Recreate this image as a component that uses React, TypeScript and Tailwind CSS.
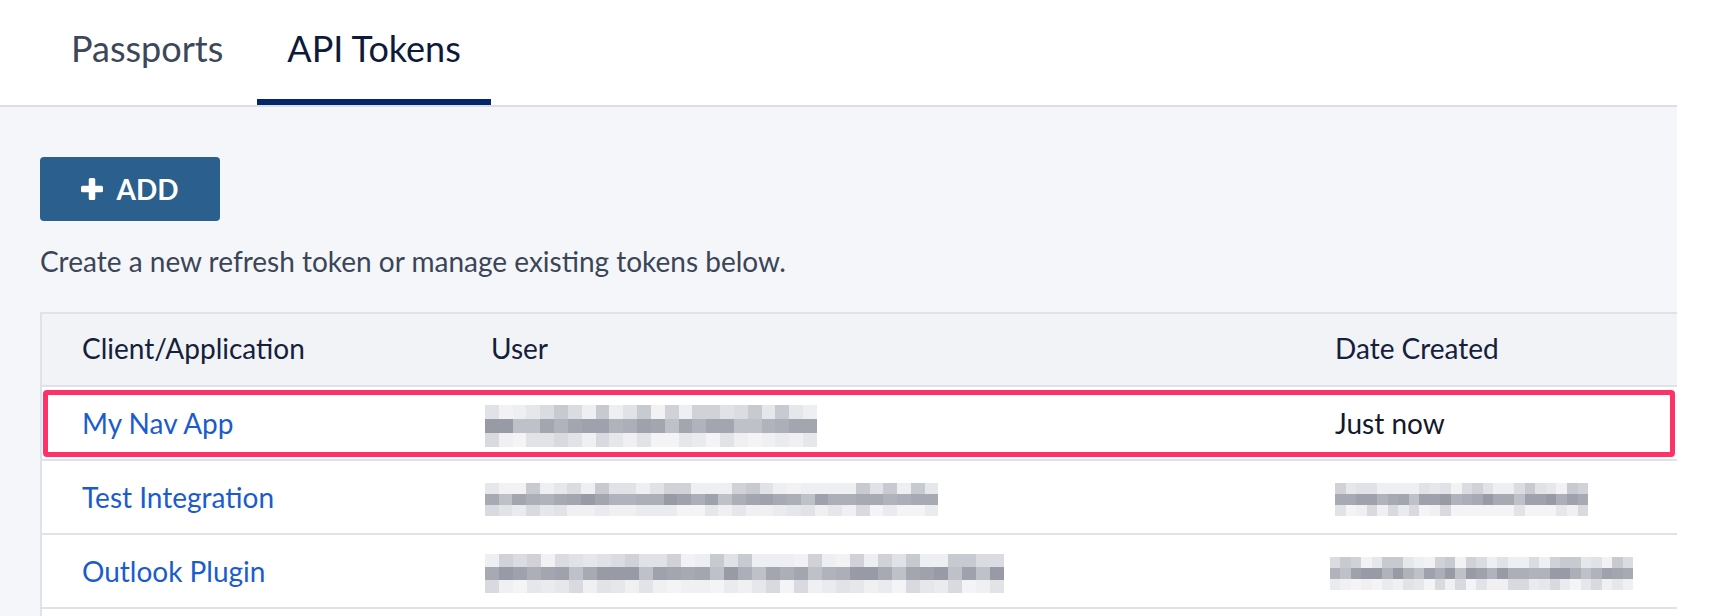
import React from "react";

// mosaic palettes (pixelated, blurred-out values)
const TOP = ["bg-[#e6e7eb]", "bg-[#dadce1]", "bg-[#eeeff2]", "bg-[#d0d2d8]", "bg-[#e1e2e7]", "bg-[#c8cad1]", "bg-[#f2f2f4]"];
const MID = ["bg-[#9fa2ac]", "bg-[#a7aab3]", "bg-[#b0b3bb]", "bg-[#989ba6]", "bg-[#bfc1c8]", "bg-[#a3a6af]", "bg-[#acafb8]"];
const BOT = ["bg-[#eaebee]", "bg-[#e2e3e7]", "bg-[#f0f0f3]", "bg-[#d8dadf]", "bg-[#f4f4f6]", "bg-[#e6e7ea]"];

function rng(seed: number) {
  let s = seed;
  return () => {
    s = (s * 9301 + 49297) % 233280;
    return s / 233280;
  };
}

type Blur = { cells: number; seed: number; w: string; h: string; ml: string };

function Mosaic({ cells, seed, h, w, ml }: Blur) {
  const rand = rng(seed);
  const rows = [TOP, MID, BOT].map((pal) => Array.from({ length: cells }, () => pal[Math.floor(rand() * pal.length)]));
  return (
    <div className={`flex flex-col ${w} ${ml}`}>
      {rows.map((row, i) => (
        <div key={i} className={`flex ${h}`}>
          {row.map((c, j) => (
            <div key={j} className={`flex-1 ${c}`} />
          ))}
        </div>
      ))}
    </div>
  );
}

type Row = { name: string; user: Blur; date: string | Blur; highlight?: boolean };

const ROWS: Row[] = [
  {
    name: "My Nav App",
    user: { cells: 24, seed: 11, w: "w-[332px]", h: "h-[14px]", ml: "-ml-[6px]" },
    date: "Just now",
    highlight: true,
  },
  {
    name: "Test Integration",
    user: { cells: 33, seed: 47, w: "w-[453px]", h: "h-[11px]", ml: "-ml-[6px]" },
    date: { cells: 24, seed: 83, w: "w-[253px]", h: "h-[11px]", ml: "ml-0" },
  },
  {
    name: "Outlook Plugin",
    user: { cells: 37, seed: 129, w: "w-[519px]", h: "h-[13px]", ml: "-ml-[6px]" },
    date: { cells: 29, seed: 201, w: "w-[303px]", h: "h-[11px]", ml: "-ml-[5px]" },
  },
];

function PlusIcon() {
  return (
    <svg width="22" height="22" viewBox="0 0 22 22" fill="currentColor">
      <rect x="7.75" y="0" width="6.5" height="22" rx="1.5" />
      <rect x="0" y="7.75" width="22" height="6.5" rx="1.5" />
    </svg>
  );
}

export default function App() {
  return (
    <div className="h-[616px] w-[1718px] overflow-hidden bg-white font-['Lato','Noto_Sans',sans-serif]">
      <div className="w-[1677px]">
        {/* Tabs */}
        <nav className="flex h-[107px] gap-[3px] border-b-2 border-[#dcdde5] bg-white pl-[40px]">
          <div className="flex cursor-pointer flex-col border-b-[6px] border-transparent px-[31px] pt-[27px] text-[36px] leading-[1.2] text-[#3c475b]">
            Passports
          </div>
          <div className="flex cursor-pointer flex-col border-b-[6px] border-[#03276a] px-[30px] pt-[27px] text-[36px] leading-[1.2] text-[#0d1a3a]">
            API Tokens
          </div>
        </nav>

        <main className="h-[509px] bg-[#f5f6f9] pl-[40px] pt-[50px]">
          <button className="flex h-[64px] w-[180px] items-center justify-center gap-[13px] rounded-[4px] bg-[#2a5f8e] text-[28px] font-bold leading-none text-white">
            <PlusIcon />
            <span>ADD</span>
          </button>

          <p className="mt-[24px] text-[28px] leading-[1.2] text-[#3b4558]">
            Create a new refresh token or manage existing tokens below.
          </p>

          {/* Tokens table */}
          <div className="mt-[33px] border-t-2 border-l-2 border-[#dfe2e9] bg-white text-[28px] leading-[1.2]">
            <div className="grid h-[73px] grid-cols-[409px_844px_1fr] items-center border-b-2 border-[#dfe2e9] bg-[#f1f3f7] text-[#15203a]">
              <div className="pl-[40px]">Client/Application</div>
              <div className="pl-[40px]">User</div>
              <div className="pl-[40px]">Date Created</div>
            </div>

            {ROWS.map((r) => (
              <div key={r.name} className="relative grid h-[74px] grid-cols-[409px_844px_1fr] items-center border-b-2 border-[#dfe2e9]">
                {r.highlight && (
                  <div className="absolute top-[3px] right-[2px] bottom-[2px] left-[1px] rounded-[4px] border-[5px] border-[#ff3169]" />
                )}
                <div className="pl-[40px] pt-[2px] text-[#1b5ccc]">{r.name}</div>
                <div className="pl-[40px] pt-[6px]">
                  <Mosaic {...r.user} />
                </div>
                <div className="pl-[40px] pt-[2px] text-[#121a2c]">
                  {typeof r.date === "string" ? r.date : <div className="pt-[4px]"><Mosaic {...r.date} /></div>}
                </div>
              </div>
            ))}
            <div className="h-[74px]" />
          </div>
        </main>
      </div>
    </div>
  );
}
